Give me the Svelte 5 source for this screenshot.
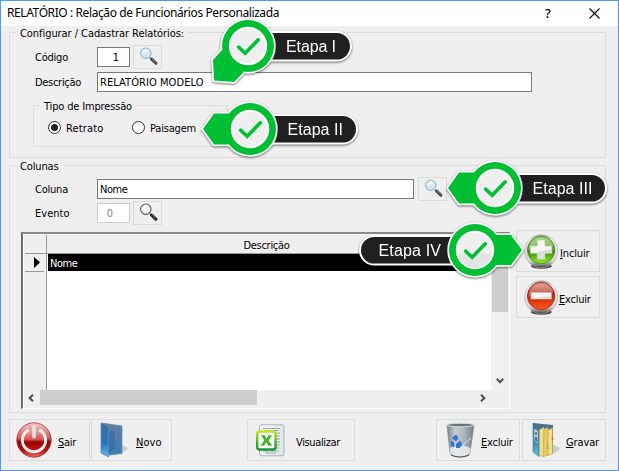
<script>
  const callouts = [
    { cx: 248, cy: 46, dir: 'diag', label: 'Etapa I', pillX: 248, pillW: 103, tx: 286, tw: 50 },
    { cx: 250, cy: 129, dir: 'left', label: 'Etapa II', pillX: 250, pillW: 107, tx: 287.5, tw: 55.5 },
    { cx: 495, cy: 188, dir: 'left', label: 'Etapa III', pillX: 495, pillW: 111, tx: 532.5, tw: 60 },
    { cx: 475, cy: 250, dir: 'right', label: 'Etapa IV', pillX: 360, pillW: 115, tx: 378.5, tw: 62.5 }
  ];
  const tails = {
    diag: '-26,4 -35,14 -34,34.5 -14,36 -5,27 0,0',
    left: '0,-15.5 -36,-15.5 -47,0 -36,15.5 0,15.5',
    right: '0,-15 36,-15 47,0 36,15 0,15'
  };

  // Spreads the letters so that a label takes its nominal width
  function fit(node, width) {
    const natural = node.getBoundingClientRect().width;
    node.style.letterSpacing = (width - natural) / node.textContent.length + 'px';
  }
</script>

{#snippet lens(muted)}
  <svg class="lens" width="20" height="20" viewBox="0 0 20 20">
    <path d="M10.5 11.5 L12.8 13.6" stroke="#999" stroke-width="1.6" />
    <path d="M12.6 13.2 L16.9 17.2" stroke={muted ? '#222' : '#4a4a4a'} stroke-width="3.2" stroke-linecap="round" />
    <path d="M13 13 L16.8 16.4" stroke="#909090" stroke-width=".8" />
    <circle cx="6.8" cy="7.2" r="5.2" fill={muted ? '#f6f6f6' : '#d3e9f7'} stroke={muted ? '#555' : '#9eb4c4'} stroke-width="1.1" />
    <path d="M3.4 7 A3.6 3.6 0 0 1 7 3.6 L9 4 Q8 7 3.4 7Z" fill="#fff" opacity=".8" />
  </svg>
{/snippet}

{#snippet orb(kind)}
  <svg class="orb" width="36" height="36" viewBox="0 0 36 36">
    <defs>
      <linearGradient id="rim-{kind}" x2="0" y2="1"><stop stop-color="#999" /><stop offset=".15" stop-color="#f2f2f2" /><stop offset=".8" stop-color="#d5d5d5" /><stop offset=".93" stop-color="#777" /><stop offset="1" stop-color="#333" /></linearGradient>
      <linearGradient id="fill-{kind}" x2="0" y2="1">
        {#if kind === 'add'}
          <stop stop-color="#9ccf6a" /><stop offset=".48" stop-color="#4c9c1c" /><stop offset=".55" stop-color="#3f8c08" /><stop offset="1" stop-color="#8cf01c" />
        {:else}
          <stop stop-color="#d88878" /><stop offset=".45" stop-color="#b02814" /><stop offset=".55" stop-color="#d02c08" /><stop offset="1" stop-color="#ff5a20" />
        {/if}
      </linearGradient>
    </defs>
    <ellipse cx="17.3" cy="32" rx="10.5" ry="2.8" fill="#444" />
    <circle cx="17.2" cy="17.2" r="16.5" fill="url(#rim-{kind})" stroke="#aaa" stroke-width=".6" />
    <circle cx="17.1" cy="16" r="13.7" fill="url(#fill-{kind})" stroke={kind === 'add' ? '#39731a' : '#8c2010'} stroke-width=".7" />
    <path d="M4.6 14 A13 13 0 0 1 29.6 12 Q17 11 4.6 17Z" fill="#fff" opacity=".25" />
    {#if kind === 'add'}
      <path d="M13.3 6 h7.6 v5.9 h6.9 v7.4 h-6.9 v6 h-7.6 v-6 h-6.9 v-7.4 h6.9z" fill="#f7f7f7" stroke="#b8c8a8" stroke-width=".7" />
      <path d="M13.6 17.5 L27.5 15 V19 H20.6 V25 H13.6Z" fill="#dcdcdc" />
    {:else}
      <rect x="7" y="12.3" width="20.5" height="6.7" fill="#f7f7f7" stroke="#d8a090" stroke-width=".7" />
      <path d="M7.4 18.6 L27.1 15 V18.6Z" fill="#e2e2e2" />
    {/if}
  </svg>
{/snippet}

<div class="window">
  <header>
    <span class="title" use:fit={272}>RELATÓRIO : Relação de Funcionários Personalizada</span>
    <span class="help">?</span>
    <svg class="close" width="11" height="11" viewBox="0 0 11 11"><path d="M.5 .5 L10.5 10.5 M10.5 .5 L.5 10.5" stroke="#111" stroke-width="1.2" /></svg>
  </header>

  <main>
    <section class="group config">
      <span class="legend"><span use:fit={164}>Configurar / Cadastrar Relatórios:</span></span>
      <div class="row tall">
        <span class="label"><span use:fit={33}>Código</span></span>
        <div class="input num">1</div>
        <div class="btn pick">{@render lens(false)}</div>
      </div>
      <div class="row second">
        <span class="label"><span use:fit={46}>Descrição</span></span>
        <div class="input desc"><span use:fit={103.5}>RELATÓRIO MODELO</span></div>
      </div>
      <div class="group kind">
        <span class="legend"><span use:fit={88}>Tipo de Impressão</span></span>
        <span class="radio on"></span><span class="opt first"><span use:fit={37.5}>Retrato</span></span>
        <span class="radio"></span><span class="opt"><span use:fit={46}>Paisagem</span></span>
      </div>
    </section>

    <section class="group columns">
      <span class="legend"><span use:fit={38.5}>Colunas</span></span>
      <div class="row tall">
        <span class="label"><span use:fit={33}>Coluna</span></span>
        <div class="input col"><span use:fit={27.5}>Nome</span></div>
        <div class="btn pick">{@render lens(false)}</div>
      </div>
      <div class="row tall">
        <span class="label"><span use:fit={34.5}>Evento</span></span>
        <div class="input num off">0</div>
        <div class="btn pick">{@render lens(true)}</div>
      </div>
      <div class="body">
        <div class="grid">
          <div class="view">
            <div class="gutter">
              <div class="ghead"></div>
              <div class="gmark"><svg width="6" height="11" viewBox="0 0 6 11"><path d="M0 0 L6 5.5 L0 11Z" /></svg></div>
            </div>
            <div class="cells">
              <div class="chead"><span use:fit={46}>Descrição</span></div>
              <div class="cell"><span use:fit={27.5}>Nome</span></div>
            </div>
            <div class="vbar">
              <div class="vthumb"></div>
              <svg width="8" height="6" viewBox="0 0 8 6"><path d="M.8 .8 L4 4.2 L7.2 .8" fill="none" stroke="#505050" stroke-width="2" /></svg>
            </div>
          </div>
          <div class="hbar">
            <svg width="6" height="8" viewBox="0 0 6 8"><path d="M5 .8 L1.6 4 L5 7.2" fill="none" stroke="#505050" stroke-width="2" /></svg>
            <div class="hthumb"></div>
            <svg class="hright" width="6" height="8" viewBox="0 0 6 8"><path d="M1 .8 L4.4 4 L1 7.2" fill="none" stroke="#505050" stroke-width="2" /></svg>
          </div>
        </div>
        <div class="side">
          <div class="btn big">{@render orb('add')}<span class="cap" use:fit={29.5}><u>I</u>ncluir</span></div>
          <div class="btn big del">{@render orb('del')}<span class="cap" use:fit={31.5}><u>E</u>xcluir</span></div>
        </div>
      </div>
    </section>

    <footer>
      <div class="btn exit">
        <svg width="36" height="36" viewBox="0 0 36 36">
          <defs>
            <linearGradient id="pw" x2="0" y2="1"><stop stop-color="#f8c8c8" /><stop offset=".45" stop-color="#cf5858" /><stop offset=".55" stop-color="#8e0808" /><stop offset=".8" stop-color="#b80c0c" /><stop offset="1" stop-color="#e87070" /></linearGradient>
            <linearGradient id="pc" x2="0" y2="1"><stop stop-color="#eca8a8" /><stop offset=".45" stop-color="#d45050" /><stop offset=".55" stop-color="#960000" /><stop offset="1" stop-color="#d81818" /></linearGradient>
          </defs>
          <circle cx="18" cy="18" r="17.2" fill="url(#pw)" stroke="#933" stroke-width=".8" />
          <path d="M12.6 7.9 A11.6 11.6 0 1 0 23.4 7.9" fill="url(#pc)" stroke="#f3eeee" stroke-width="3" />
          <path d="M18 4.8 V14.6" stroke="#e4e0e4" stroke-width="3.8" stroke-linecap="round" />
        </svg>
        <span class="cap" use:fit={18}><u>S</u>air</span>
      </div>
      <div class="btn new">
        <svg width="30" height="36" viewBox="0 0 30 36">
          <defs>
            <linearGradient id="nf" x2="0" y2="1"><stop stop-color="#65809f" /><stop offset="1" stop-color="#3c7db8" /></linearGradient>
            <linearGradient id="nb" x2="0" y2="1"><stop stop-color="#3d6c9c" /><stop offset=".6" stop-color="#2b77bd" /><stop offset="1" stop-color="#68b8e8" /></linearGradient>
          </defs>
          <path d="M20 22 L28 26 Q26 31 8 34Z" fill="#999" opacity=".4" />
          <path d="M2 1 L22 4 V31.5 L8 33Z" fill="url(#nf)" stroke="#5c86ac" stroke-width=".7" />
          <path d="M9 8 L15 9 V27 L9 30Z" fill="#3468a0" opacity=".6" />
          <path d="M1 1 L8.5 5 V35 L1 31Z" fill="url(#nb)" stroke="#4e8abb" stroke-width=".7" />
        </svg>
        <span class="cap" use:fit={25.5}><u>N</u>ovo</span>
      </div>
      <div class="btn view-btn">
        <svg width="29" height="33" viewBox="0 0 29 33">
          <defs>
            <linearGradient id="xb" x2="0" y2="1"><stop stop-color="#c0ea18" /><stop offset=".6" stop-color="#3fb52c" /><stop offset="1" stop-color="#0d9838" /></linearGradient>
            <linearGradient id="pg" x2="1" y2="0"><stop stop-color="#f6f8f8" /><stop offset="1" stop-color="#e0e5e7" /></linearGradient>
          </defs>
          <rect x="3.5" y=".8" width="24.5" height="31" rx="2" fill="url(#pg)" stroke="#aab3b8" />
          <path d="M7 4.5H24M8 6.5H23M16 9H24M18 12H24M20 15H24M20 18H24M20 21H24M20 24H23M7 27H23M9 29H20" stroke="#9a9fa3" stroke-width="1" stroke-dasharray="5 .6 3 .5" />
          <rect x="1.2" y="7.5" width="18.3" height="18" rx="2.5" fill="#fff" stroke="url(#xb)" stroke-width="2.4" />
          <path d="M4.9 11.2 h3.8 l1.8 3.2 l2-3.2 h3.6 l-3.6 5.2 l3.8 5.3 h-4 l-2-3.4 l-2.2 3.4 h-3.6 l3.8-5.4z" fill="#43b629" />
        </svg>
        <span class="cap" use:fit={44}>Visualizar</span>
      </div>
      <div class="btn trash">
        <svg width="29" height="36" viewBox="0 0 29 36">
          <defs><linearGradient id="tr" x2="1" y2="0"><stop stop-color="#777f84" /><stop offset=".3" stop-color="#c4cdd3" /><stop offset=".65" stop-color="#a8b3ba" /><stop offset="1" stop-color="#757d82" /></linearGradient></defs>
          <path d="M1 3 L4 31 Q5 35 14.5 35 Q23 35 24 31 L28 3Z" fill="url(#tr)" stroke="#80898f" stroke-width=".7" />
          <path d="M3.8 26 Q14 21 24.7 26 L24 31 Q20 35 14 34.5 Q6 35 4 31Z" fill="#f4f4f4" opacity=".75" />
          <path d="M5 33 Q14 37 23 33" fill="none" stroke="#555" stroke-width="1.2" />
          <ellipse cx="14.5" cy="3" rx="13.5" ry="1.8" fill="#69737a" stroke="#d8dde0" stroke-width="1" />
          <path d="M25 16 L17 23 L22 30" fill="none" stroke="#e6eaec" stroke-width="1" opacity=".8" />
          <path d="M6 16 L10 12.5 L12.5 16 L10 19.5 L8 18Z M4.5 19 L8 20 L8.5 25 L5.5 24.5Z M10 22 L14.5 18.5 L16 23 L13.5 26 L10 26Z" fill="#2f73d8" />
        </svg>
        <span class="cap" use:fit={31.5}><u>E</u>xcluir</span>
      </div>
      <div class="btn save">
        <svg width="30" height="36" viewBox="0 0 30 36">
          <defs><linearGradient id="sv" x2="0" y2="1"><stop stop-color="#4b7292" /><stop offset=".6" stop-color="#4a8bb0" /><stop offset="1" stop-color="#5cc8e0" /></linearGradient></defs>
          <path d="M20 22 L28 26 Q26 32 10 34Z" fill="#999" opacity=".4" />
          <path d="M1 1 L21 3 V31 L7 34Z" fill="#4b718f" />
          <path d="M7 8 L12 5 V34 L7 34Z" fill="#f2df8d" stroke="#b89c42" stroke-width=".5" />
          <path d="M12 7 L16 5.5 V33 L11 35Z" fill="#e9ca62" stroke="#b89c42" stroke-width=".5" />
          <path d="M16 8 L20.5 6 V32 L16 33.5Z" fill="#f5df84" stroke="#b89c42" stroke-width=".5" />
          <path d="M15.5 23 V27" stroke="#79b79c" stroke-width="1.5" /><path d="M20.5 15 V18" stroke="#d8664c" stroke-width="1.5" />
          <path d="M1 1 L7 5 V34.5 L1 30Z" fill="url(#sv)" stroke="#3e6d8c" stroke-width=".6" />
          <path d="M2.3 7 L5.8 9 V21 L2.3 19Z" fill="#bed9ea" /><circle cx="4" cy="11.5" r="1.3" fill="#6b6660" /><path d="M2.6 18.5 L3.3 14.5 L5 15.2 L5.6 20Z" fill="#3677ad" />
        </svg>
        <span class="cap" use:fit={33}><u>G</u>ravar</span>
      </div>
    </footer>
  </main>

  <svg class="callouts" width="619" height="471" viewBox="0 0 619 471">
    {#each callouts as c}
      <g class="callout">
        <rect x={c.pillX} y={c.cy - 14} width={c.pillW} height="28.5" rx="14.2" fill="#202020" stroke="#fff" stroke-width="2" />
        <g transform="translate({c.cx} {c.cy})">
          <g fill="#fff" stroke="#fff" stroke-width="3.4" stroke-linejoin="round">
            <polygon points={tails[c.dir]} /><circle r="26" />
          </g>
          <g fill="#00bf32"><polygon points={tails[c.dir]} /><circle r="26" /></g>
          <circle r="18.2" fill="#efefef" stroke="#fff" stroke-width="2" />
          {#if c.dir === 'right'}<path d="M-17 4 H17 A17.3 17.3 0 0 1 -17 4Z" fill="#e4e4e4" />{/if}
          <path d="M-9.3 1.2 L-2.8 7.2 L10.3 -6.2" fill="none" stroke="#00bf32" stroke-width="3.6" stroke-linecap="round" stroke-linejoin="miter" />
        </g>
        <text x={c.tx} y={c.cy + 6} textLength={c.tw}>{c.label}</text>
      </g>
    {/each}
  </svg>
</div>

<style>
  .window { position: relative; width: 619px; height: 471px; box-sizing: border-box; border: 1px solid #4b9df0; background: #efefef; font: 11px/14px "DejaVu Sans Condensed", "DejaVu Sans", sans-serif; font-stretch: condensed; color: #000; overflow: hidden; display: flex; flex-direction: column; white-space: nowrap; }
  .window * { box-sizing: border-box; }
  span { white-space: pre; }
  svg { flex: none; display: block; }
  header { height: 25px; background: #fff; display: flex; align-items: center; padding: 0 18px 0 6px; font: 12px/14px "Noto Sans", "Open Sans", sans-serif; }
  .title { margin-top: -1px; }
  .help { margin: -2px 37px 0 auto; font-size: 13px; font-weight: 500; width: 7px; }
  main { padding: 6px 12px 0 8px; display: flex; flex-direction: column; }
  .group { position: relative; border: 1px solid #dcdcdc; }
  .legend { position: absolute; top: -6px; left: 6px; padding: 0 4px; background: #efefef; line-height: 14px; }
  .config { height: 126px; padding: 12px 0 0; }
  .row { display: flex; align-items: center; height: 20px; padding-left: 25px; }
  .row.tall { height: 24px; }
  .row.second { margin-top: 3px; }
  .label { width: 62px; flex: none; padding-top: 2px; }
  .input { height: 20px; flex: none; background: #fff; border: 1px solid #7a7a7a; padding: 1px 2px 0; line-height: 18px; }
  .num { width: 33px; padding: 1px 10px 0 0; text-align: right; }
  .num.off { border-color: #ccc; color: #808080; padding-right: 16px; }
  .desc { width: 435px; }
  .col { width: 317px; }
  .btn { border: 1px solid #dadada; display: flex; align-items: center; flex: none; }
  .pick { width: 29px; height: 24px; margin-left: 3px; padding: 0 0 0 5px; }
  .col + .pick { margin-left: 4px; }
  .lens { margin-top: -2px; }
  .kind { margin: 13px 0 0 23px; width: 195px; height: 42px; display: flex; align-items: center; padding: 3px 0 0 14px; }
  .kind .legend { left: 6px; }
  .radio { width: 13px; height: 13px; border: 1px solid #333; border-radius: 50%; background: #fff; display: flex; align-items: center; justify-content: center; flex: none; }
  .on::after { content: ""; width: 7px; height: 7px; border-radius: 50%; background: #222; }
  .opt { margin-left: 5px; line-height: 14px; padding-top: 2px; }
  .opt.first { width: 66px; }
  .columns { margin-top: 7px; height: 248px; padding: 11px 0 0; }
  .body { display: flex; padding: 6px 5px 0 11px; gap: 6px; }
  .grid { width: 489px; height: 177px; margin-top: 1px; border-style: solid; border-width: 2px 1px 1px 2px; border-color: #8a8a8a #fff #fff #6f6f6f; padding: 1px 1px 1px 1px; display: flex; flex-direction: column; background: #efefef; box-shadow: inset 1px 1px #fff; }
  .view { display: flex; height: 155px; }
  .gutter { width: 23px; border-right: 1px solid #999; flex: none; padding-left: 1px; }
  .ghead { height: 19px; border-bottom: 1px solid #999; }
  .gmark { height: 18px; width: 19px; border-bottom: 1px solid #999; padding: 3px 0 0 9px; }
  .cells { flex: 1; background: #fff; }
  .chead { height: 19px; background: #efefef; border-bottom: 1px solid #999; text-align: center; line-height: 19px; padding: 1px 5px 0 0; }
  .cell { height: 17px; background: #000; color: #fff; line-height: 17px; padding: 1px 0 0 2px; border-left: 1px solid #fff; }
  .vbar { width: 17px; background: #f0f0f0; display: flex; flex-direction: column; align-items: center; justify-content: space-between; padding: 17px 0 6px 1px; }
  .vthumb { width: 16px; height: 60px; background: #cdcdcd; }
  .hbar { height: 15px; display: flex; align-items: center; padding-left: 4px; }
  .hthumb { width: 217px; height: 15px; background: #cdcdcd; margin-left: 6px; }
  .hright { margin-left: 223px; }
  .side { display: flex; flex-direction: column; gap: 4px; margin-top: -1px; }
  .big { width: 84px; height: 42px; padding-left: 7px; }
  .orb { margin-top: 1px; }
  .cap { margin-top: 6px; }
  .big .cap { margin-left: 0; }
  .del .cap { margin-left: -1px; }
  u { text-underline-offset: 1px; text-decoration-thickness: 1px; }
  footer { display: flex; margin-top: 6px; height: 42px; }
  .exit { width: 81px; padding-left: 6px; }
  .exit .cap { margin-left: 6px; }
  .new { width: 81px; margin-left: 1px; padding-left: 8px; }
  .new .cap { margin-left: 6px; }
  .view-btn { width: 108px; margin-left: 75px; padding-left: 8px; }
  .view-btn .cap { margin-left: 11px; }
  .trash { width: 84px; margin-left: 81px; padding-left: 9px; }
  .trash .cap { margin-left: 6px; }
  .save { width: 84px; margin-left: 2px; padding-left: 9px; }
  .save .cap { margin-left: 4px; }
  .callouts { position: absolute; left: -1px; top: -1px; pointer-events: none; }
  .callout { filter: drop-shadow(0 1.5px 1px rgba(0, 0, 0, .55)); }
  .callouts text { font: 16px "Liberation Sans", Arial, sans-serif; fill: #fff; }
</style>
